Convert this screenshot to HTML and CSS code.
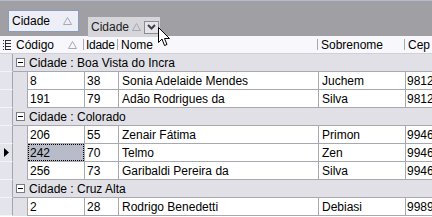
FILE: index.html
```html
<!DOCTYPE html>
<html>
<head>
<meta charset="utf-8">
<link rel="stylesheet" href="styles.css">
</head>
<body>
<div class="grid">
  <div class="grouppanel">
    <div class="gbox">
      <span>Cidade</span>
      <svg class="tri" width="9" height="8" viewBox="0 0 9 8"><polygon points="4.5,0.5 8.5,7.5 0.5,7.5" fill="none" stroke="#a8a8b0"/></svg>
    </div>
    <div class="ghost">
      <span class="gtxt">Cidade</span>
      <svg class="tri" width="9" height="8" viewBox="0 0 9 8"><polygon points="4.5,0.5 8.5,7.5 0.5,7.5" fill="none" stroke="#a8a8b0"/></svg>
      <span class="ddbtn"><svg width="9" height="6" viewBox="0 0 9 6"><polyline points="1,1 4.5,4.5 8,1" fill="none" stroke="#404048" stroke-width="2"/></svg></span>
    </div>
    <svg class="cursor" width="14" height="20" viewBox="0 0 14 20"><path d="M0.5 0.5 L0.5 15.5 L4 12 L6.5 18.5 L9 17.5 L6.5 11.5 L11.5 11.5 Z" fill="#fff" stroke="#000" stroke-linejoin="miter"/></svg>
  </div>
  <div class="header">
    <div class="hind"><svg width="8" height="10" viewBox="0 0 8 10"><g fill="#303030"><rect x="0" y="0" width="1" height="1"/><rect x="0" y="3" width="1" height="1"/><rect x="0" y="6" width="1" height="1"/><rect x="0" y="9" width="1" height="1"/><rect x="2" y="0" width="6" height="1"/><rect x="2" y="3" width="6" height="1"/><rect x="2" y="6" width="6" height="1"/><rect x="2" y="9" width="6" height="1"/><rect x="2" y="1" width="1" height="8"/></g></svg></div>
    <div class="hcell hc-cod"><span>Código</span><svg class="tri" width="9" height="8" viewBox="0 0 9 8"><polygon points="4.5,0.5 8.5,7.5 0.5,7.5" fill="none" stroke="#a8a8b0"/></svg></div>
    <div class="hcell hc-ida">Idade</div>
    <div class="hcell hc-nom">Nome</div>
    <div class="hcell hc-sob">Sobrenome</div>
    <div class="hcell hc-cep">Cep</div>
  </div>
  <div class="body">
    <div class="row grow"><div class="ind"></div><div class="gcell"><span class="exp"></span>Cidade : Boa Vista do Incra</div></div>
    <div class="row"><div class="ind"></div><div class="indent"></div><div class="cell c-cod">8</div><div class="cell c-ida">38</div><div class="cell c-nom">Sonia Adelaide Mendes</div><div class="cell c-sob">Juchem</div><div class="cell c-cep">98120</div></div>
    <div class="row"><div class="ind"></div><div class="indent"></div><div class="cell c-cod">191</div><div class="cell c-ida">79</div><div class="cell c-nom">Adão Rodrigues da</div><div class="cell c-sob">Silva</div><div class="cell c-cep">98120</div></div>
    <div class="row grow"><div class="ind"></div><div class="gcell"><span class="exp"></span>Cidade : Colorado</div></div>
    <div class="row"><div class="ind"></div><div class="indent"></div><div class="cell c-cod">206</div><div class="cell c-ida">55</div><div class="cell c-nom">Zenair Fátima</div><div class="cell c-sob">Primon</div><div class="cell c-cep">99460</div></div>
    <div class="row"><div class="ind cur"><svg width="5" height="9" viewBox="0 0 5 9"><polygon points="0,0 5,4.5 0,9" fill="#000"/></svg></div><div class="indent"></div><div class="cell c-cod sel"><span>242</span></div><div class="cell c-ida">70</div><div class="cell c-nom">Telmo</div><div class="cell c-sob">Zen</div><div class="cell c-cep">99460</div></div>
    <div class="row"><div class="ind"></div><div class="indent"></div><div class="cell c-cod">256</div><div class="cell c-ida">73</div><div class="cell c-nom">Garibaldi Pereira da</div><div class="cell c-sob">Silva</div><div class="cell c-cep">99460</div></div>
    <div class="row grow"><div class="ind"></div><div class="gcell"><span class="exp"></span>Cidade : Cruz Alta</div></div>
    <div class="row"><div class="ind"></div><div class="indent"></div><div class="cell c-cod">2</div><div class="cell c-ida">28</div><div class="cell c-nom">Rodrigo Benedetti</div><div class="cell c-sob">Debiasi</div><div class="cell c-cep">99890</div></div>
  </div>
</div>
</body>
</html>
```
FILE: styles.css
```css
* { box-sizing: border-box; }
html, body { margin: 0; padding: 0; }
body {
  width: 432px;
  height: 217px;
  overflow: hidden;
  font-family: "Liberation Sans", Arial, sans-serif;
  font-size: 12px;
  color: #000;
  background: #fff;
}
.grid { width: 432px; height: 217px; overflow: hidden; position: relative; }

.grouppanel {
  height: 36px;
  background: #a0a0a4;
  border-top: 1px solid #b4bccc;
  padding: 9px 0 0 8px;
  position: relative;
}
.gbox {
  width: 71px;
  height: 22px;
  background: #eeeef6;
  border: 1px solid #8a9cc0;
  display: flex;
  align-items: center;
  padding: 0 0 0 3px;
}
.gbox span { flex: 1; }
.gbox .tri { margin-right: 6px; }
.ghost {
  position: absolute;
  left: 88px;
  top: 16px;
  width: 72px;
  height: 20px;
  background: #d6d6da;
  display: flex;
  align-items: center;
  padding-left: 3px;
  color: #202020;
}
.gtxt { width: 41px; }
.ghost .tri { margin-right: 2px; }
.ddbtn {
  width: 15px;
  height: 13px;
  border: 1px solid #8c8c94;
  background: #e4e4ea;
  display: flex;
  align-items: center;
  justify-content: center;
  margin-left: 1px;
}
.cursor { position: absolute; left: 158px; top: 26px; }

.header {
  height: 18px;
  display: flex;
  background: #f8f8fc;
  border-bottom: 1px solid #d0d0d8;
  align-items: stretch;
}
.hind { width: 14px; display: flex; align-items: center; padding-left: 3px; }
.hcell {
  display: flex;
  align-items: center;
  padding-left: 2px;
  position: relative;
  white-space: nowrap;
}
.hcell::after {
  content: "";
  position: absolute;
  right: 0;
  top: 3px;
  bottom: 3px;
  width: 1px;
  background: #a8a8b0;
}
.hc-cod { width: 70px; }
.hc-cod span { flex: 1; }
.hc-cod .tri { margin-right: 7px; }
.hc-ida { width: 34px; padding-left: 2px; letter-spacing: -0.3px; }
.hc-nom { width: 200px; padding-left: 3px; }
.hc-sob { width: 87px; padding-left: 3px; }
.hc-cep { flex: 1; padding-left: 3px; }
.hc-cep::after { display: none; }

.row { height: 18px; display: flex; }
.ind {
  width: 13px;
  background: #e4e4ec;
  border-right: 1px solid #a4a4ac;
  border-bottom: 1px solid #f4f4f8;
  display: flex;
  align-items: center;
  padding-left: 4px;
}
.indent { width: 14px; background: #e0e0e6; border-bottom: 1px solid #e0e0e6; }
.gcell {
  flex: 1;
  background: #e0e0e6;
  border-bottom: 1px solid #a8a8b0;
  display: flex;
  align-items: center;
  padding-left: 3px;
  white-space: nowrap;
}
.exp {
  width: 9px;
  height: 9px;
  border: 1px solid #7a7a84;
  background: #fff;
  margin-right: 4px;
  position: relative;
}
.exp::after {
  content: "";
  position: absolute;
  left: 1px;
  right: 1px;
  top: 3px;
  height: 1px;
  background: #000;
}
.cell {
  background: #fff;
  border-left: 1px solid #a8a8b0;
  border-bottom: 1px solid #a8a8b0;
  display: flex;
  align-items: center;
  padding-left: 2px;
  white-space: nowrap;
  overflow: hidden;
}
.c-cod { width: 57px; }
.c-ida { width: 34px; }
.c-nom { width: 200px; padding-left: 3px; }
.c-sob { width: 87px; padding-left: 3px; }
.c-cep { flex: 1; padding-left: 1px; }
.sel { padding: 0; }
.sel span {
  display: flex;
  align-items: center;
  width: 100%;
  height: 100%;
  background: #b8bcc8;
  border: 1px dotted #000;
  padding-left: 1px;
}
```
